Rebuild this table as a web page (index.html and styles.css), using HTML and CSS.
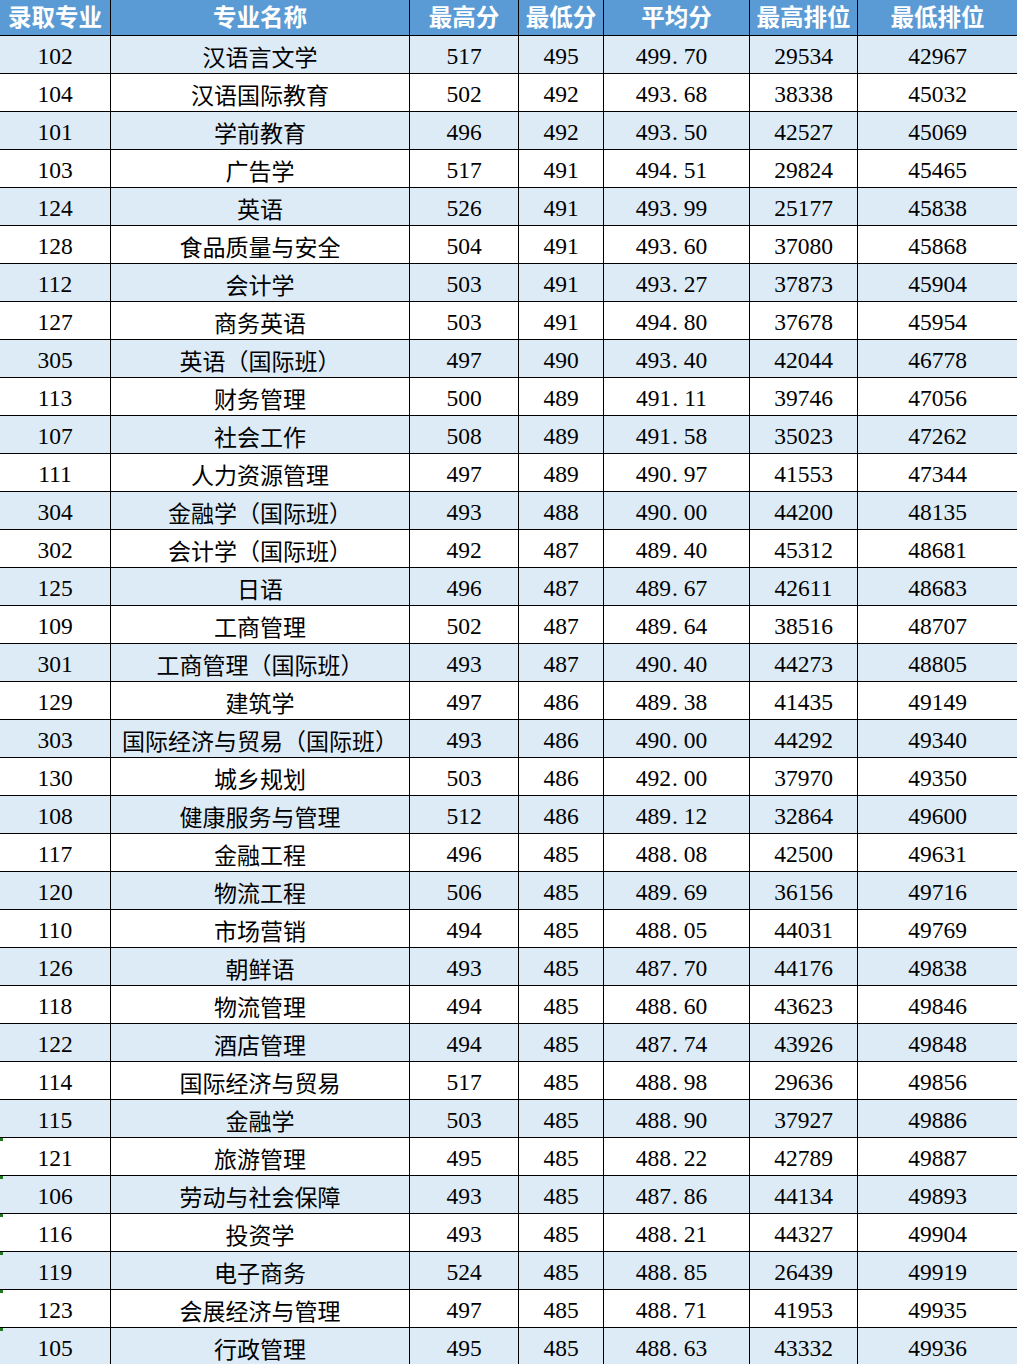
FILE: index.html
```html
<!DOCTYPE html>
<html lang="zh-CN">
<head>
<meta charset="utf-8">
<title>录取专业分数</title>
<link rel="stylesheet" href="styles.css">
</head>
<body>
<div class="sheet">
  <div class="row head">
    <div class="c">录取专业</div><div class="c">专业名称</div><div class="c">最高分</div><div class="c">最低分</div><div class="c">平均分</div><div class="c">最高排位</div><div class="c">最低排位</div>
  </div>
  <div class="row odd"><div class="c n">102</div><div class="c t">汉语言文学</div><div class="c n">517</div><div class="c n">495</div><div class="c n">499<span class="dot">.</span>70</div><div class="c n">29534</div><div class="c n">42967</div></div>
  <div class="row"><div class="c n">104</div><div class="c t">汉语国际教育</div><div class="c n">502</div><div class="c n">492</div><div class="c n">493<span class="dot">.</span>68</div><div class="c n">38338</div><div class="c n">45032</div></div>
  <div class="row odd"><div class="c n">101</div><div class="c t">学前教育</div><div class="c n">496</div><div class="c n">492</div><div class="c n">493<span class="dot">.</span>50</div><div class="c n">42527</div><div class="c n">45069</div></div>
  <div class="row"><div class="c n">103</div><div class="c t">广告学</div><div class="c n">517</div><div class="c n">491</div><div class="c n">494<span class="dot">.</span>51</div><div class="c n">29824</div><div class="c n">45465</div></div>
  <div class="row odd"><div class="c n">124</div><div class="c t">英语</div><div class="c n">526</div><div class="c n">491</div><div class="c n">493<span class="dot">.</span>99</div><div class="c n">25177</div><div class="c n">45838</div></div>
  <div class="row"><div class="c n">128</div><div class="c t">食品质量与安全</div><div class="c n">504</div><div class="c n">491</div><div class="c n">493<span class="dot">.</span>60</div><div class="c n">37080</div><div class="c n">45868</div></div>
  <div class="row odd"><div class="c n">112</div><div class="c t">会计学</div><div class="c n">503</div><div class="c n">491</div><div class="c n">493<span class="dot">.</span>27</div><div class="c n">37873</div><div class="c n">45904</div></div>
  <div class="row"><div class="c n">127</div><div class="c t">商务英语</div><div class="c n">503</div><div class="c n">491</div><div class="c n">494<span class="dot">.</span>80</div><div class="c n">37678</div><div class="c n">45954</div></div>
  <div class="row odd"><div class="c n">305</div><div class="c t">英语（国际班）</div><div class="c n">497</div><div class="c n">490</div><div class="c n">493<span class="dot">.</span>40</div><div class="c n">42044</div><div class="c n">46778</div></div>
  <div class="row"><div class="c n">113</div><div class="c t">财务管理</div><div class="c n">500</div><div class="c n">489</div><div class="c n">491<span class="dot">.</span>11</div><div class="c n">39746</div><div class="c n">47056</div></div>
  <div class="row odd"><div class="c n">107</div><div class="c t">社会工作</div><div class="c n">508</div><div class="c n">489</div><div class="c n">491<span class="dot">.</span>58</div><div class="c n">35023</div><div class="c n">47262</div></div>
  <div class="row"><div class="c n">111</div><div class="c t">人力资源管理</div><div class="c n">497</div><div class="c n">489</div><div class="c n">490<span class="dot">.</span>97</div><div class="c n">41553</div><div class="c n">47344</div></div>
  <div class="row odd"><div class="c n">304</div><div class="c t">金融学（国际班）</div><div class="c n">493</div><div class="c n">488</div><div class="c n">490<span class="dot">.</span>00</div><div class="c n">44200</div><div class="c n">48135</div></div>
  <div class="row"><div class="c n">302</div><div class="c t">会计学（国际班）</div><div class="c n">492</div><div class="c n">487</div><div class="c n">489<span class="dot">.</span>40</div><div class="c n">45312</div><div class="c n">48681</div></div>
  <div class="row odd"><div class="c n">125</div><div class="c t">日语</div><div class="c n">496</div><div class="c n">487</div><div class="c n">489<span class="dot">.</span>67</div><div class="c n">42611</div><div class="c n">48683</div></div>
  <div class="row"><div class="c n">109</div><div class="c t">工商管理</div><div class="c n">502</div><div class="c n">487</div><div class="c n">489<span class="dot">.</span>64</div><div class="c n">38516</div><div class="c n">48707</div></div>
  <div class="row odd"><div class="c n">301</div><div class="c t">工商管理（国际班）</div><div class="c n">493</div><div class="c n">487</div><div class="c n">490<span class="dot">.</span>40</div><div class="c n">44273</div><div class="c n">48805</div></div>
  <div class="row"><div class="c n">129</div><div class="c t">建筑学</div><div class="c n">497</div><div class="c n">486</div><div class="c n">489<span class="dot">.</span>38</div><div class="c n">41435</div><div class="c n">49149</div></div>
  <div class="row odd"><div class="c n">303</div><div class="c t">国际经济与贸易（国际班）</div><div class="c n">493</div><div class="c n">486</div><div class="c n">490<span class="dot">.</span>00</div><div class="c n">44292</div><div class="c n">49340</div></div>
  <div class="row"><div class="c n">130</div><div class="c t">城乡规划</div><div class="c n">503</div><div class="c n">486</div><div class="c n">492<span class="dot">.</span>00</div><div class="c n">37970</div><div class="c n">49350</div></div>
  <div class="row odd"><div class="c n">108</div><div class="c t">健康服务与管理</div><div class="c n">512</div><div class="c n">486</div><div class="c n">489<span class="dot">.</span>12</div><div class="c n">32864</div><div class="c n">49600</div></div>
  <div class="row"><div class="c n">117</div><div class="c t">金融工程</div><div class="c n">496</div><div class="c n">485</div><div class="c n">488<span class="dot">.</span>08</div><div class="c n">42500</div><div class="c n">49631</div></div>
  <div class="row odd"><div class="c n">120</div><div class="c t">物流工程</div><div class="c n">506</div><div class="c n">485</div><div class="c n">489<span class="dot">.</span>69</div><div class="c n">36156</div><div class="c n">49716</div></div>
  <div class="row"><div class="c n">110</div><div class="c t">市场营销</div><div class="c n">494</div><div class="c n">485</div><div class="c n">488<span class="dot">.</span>05</div><div class="c n">44031</div><div class="c n">49769</div></div>
  <div class="row odd"><div class="c n">126</div><div class="c t">朝鲜语</div><div class="c n">493</div><div class="c n">485</div><div class="c n">487<span class="dot">.</span>70</div><div class="c n">44176</div><div class="c n">49838</div></div>
  <div class="row"><div class="c n">118</div><div class="c t">物流管理</div><div class="c n">494</div><div class="c n">485</div><div class="c n">488<span class="dot">.</span>60</div><div class="c n">43623</div><div class="c n">49846</div></div>
  <div class="row odd"><div class="c n">122</div><div class="c t">酒店管理</div><div class="c n">494</div><div class="c n">485</div><div class="c n">487<span class="dot">.</span>74</div><div class="c n">43926</div><div class="c n">49848</div></div>
  <div class="row"><div class="c n">114</div><div class="c t">国际经济与贸易</div><div class="c n">517</div><div class="c n">485</div><div class="c n">488<span class="dot">.</span>98</div><div class="c n">29636</div><div class="c n">49856</div></div>
  <div class="row odd"><div class="c n">115</div><div class="c t">金融学</div><div class="c n">503</div><div class="c n">485</div><div class="c n">488<span class="dot">.</span>90</div><div class="c n">37927</div><div class="c n">49886</div></div>
  <div class="row flag"><div class="c n">121</div><div class="c t">旅游管理</div><div class="c n">495</div><div class="c n">485</div><div class="c n">488<span class="dot">.</span>22</div><div class="c n">42789</div><div class="c n">49887</div></div>
  <div class="row odd flag"><div class="c n">106</div><div class="c t">劳动与社会保障</div><div class="c n">493</div><div class="c n">485</div><div class="c n">487<span class="dot">.</span>86</div><div class="c n">44134</div><div class="c n">49893</div></div>
  <div class="row flag"><div class="c n">116</div><div class="c t">投资学</div><div class="c n">493</div><div class="c n">485</div><div class="c n">488<span class="dot">.</span>21</div><div class="c n">44327</div><div class="c n">49904</div></div>
  <div class="row odd flag"><div class="c n">119</div><div class="c t">电子商务</div><div class="c n">524</div><div class="c n">485</div><div class="c n">488<span class="dot">.</span>85</div><div class="c n">26439</div><div class="c n">49919</div></div>
  <div class="row flag"><div class="c n">123</div><div class="c t">会展经济与管理</div><div class="c n">497</div><div class="c n">485</div><div class="c n">488<span class="dot">.</span>71</div><div class="c n">41953</div><div class="c n">49935</div></div>
  <div class="row odd flag"><div class="c n">105</div><div class="c t">行政管理</div><div class="c n">495</div><div class="c n">485</div><div class="c n">488<span class="dot">.</span>63</div><div class="c n">43332</div><div class="c n">49936</div></div>
</div>
</body>
</html>
```
FILE: styles.css
```css
html, body {
  margin: 0;
  padding: 0;
  background: #ffffff;
}

body {
  width: 1017px;
  height: 1364px;
  overflow: hidden;
}

.sheet {
  display: grid;
  grid-template-columns: 110px 298px 108px 84px 145px 107px 159px;
  grid-auto-rows: 37px;
  grid-template-rows: 35px;
  gap: 1px;
  background: #000000;
  width: 1017px;
  font-family: "Liberation Serif", "Noto Sans CJK SC", serif;
  color: #000000;
}

.row {
  display: contents;
}

.c {
  display: flex;
  align-items: center;
  justify-content: center;
  background: #ffffff;
  font-size: 23.5px;
  line-height: 1;
  padding-top: 4px;
  box-sizing: border-box;
  white-space: nowrap;
  position: relative;
}

.row .c.n:nth-child(5) {
  padding-right: 10px;
}

.row.odd .c {
  background: #ddebf7;
}

.row.head .c {
  background: #5b9bd5;
  color: #ffffff;
  font-family: "Noto Sans CJK SC", sans-serif;
  font-weight: 700;
  font-size: 23.5px;
  padding-top: 0;
  padding-bottom: 1px;
}

.c.t {
  font-family: "Noto Sans CJK SC", sans-serif;
  font-size: 23px;
  padding-top: 3px;
}

.dot {
  display: inline-block;
  width: 0.55em;
  padding-left: 1px;
  box-sizing: border-box;
  text-align: left;
}

.row.flag .c:first-child::before {
  content: "";
  position: absolute;
  left: 0;
  top: 0;
  width: 3px;
  height: 3px;
  background: #1f7a1f;
}
```
